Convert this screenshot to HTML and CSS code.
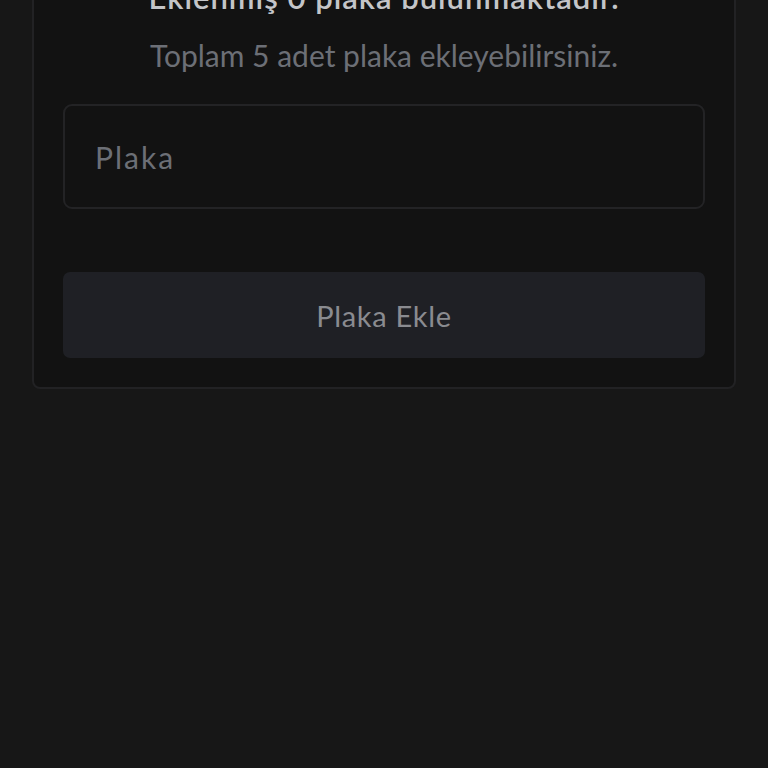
FILE: index.html
```html
<!DOCTYPE html>
<html lang="tr">
<head>
<meta charset="utf-8">
<link rel="stylesheet" href="styles.css">
</head>
<body>
<main class="card">
  <h1 class="title">Eklenmiş 0 plaka bulunmaktadır.</h1>
  <p class="subtitle">Toplam 5 adet plaka ekleyebilirsiniz.</p>
  <input class="field" type="text" placeholder="Plaka">
  <button class="btn" type="button">Plaka Ekle</button>
</main>
</body>
</html>
```
FILE: styles.css
```css
html, body {
  margin: 0;
  padding: 0;
  background: #171717;
  height: 100%;
  overflow: hidden;
}
body {
  font-family: "Lato", "Noto Sans", sans-serif;
}
.card {
  margin: -55px 32px 0;
  background: #121212;
  border: 2px solid #222224;
  border-radius: 8px;
  padding: 30px 29px 29px;
  display: flex;
  flex-direction: column;
  align-items: stretch;
}
.title {
  margin: 0;
  text-align: center;
  font-size: 31px;
  font-weight: 600;
  letter-spacing: 1px;
  line-height: 40px;
  color: #c4c5c8;
}
.subtitle {
  margin: 18px 0 0;
  text-align: center;
  font-size: 30px;
  line-height: 40px;
  color: #6c6f76;
}
.field {
  margin-top: 29px;
  height: 105px;
  box-sizing: border-box;
  background: #121212;
  border: 2px solid #232325;
  border-radius: 9px;
  padding: 0 30px;
  font-family: inherit;
  font-size: 30px;
  letter-spacing: 2px;
  color: #c9cacd;
  outline: none;
}
.field::placeholder {
  color: #6c6f76;
}
.btn {
  margin-top: 63px;
  height: 86px;
  background: #1f2025;
  border: none;
  border-radius: 7px;
  font-family: inherit;
  font-size: 29px;
  letter-spacing: 0.7px;
  color: #8a8b90;
}
```
